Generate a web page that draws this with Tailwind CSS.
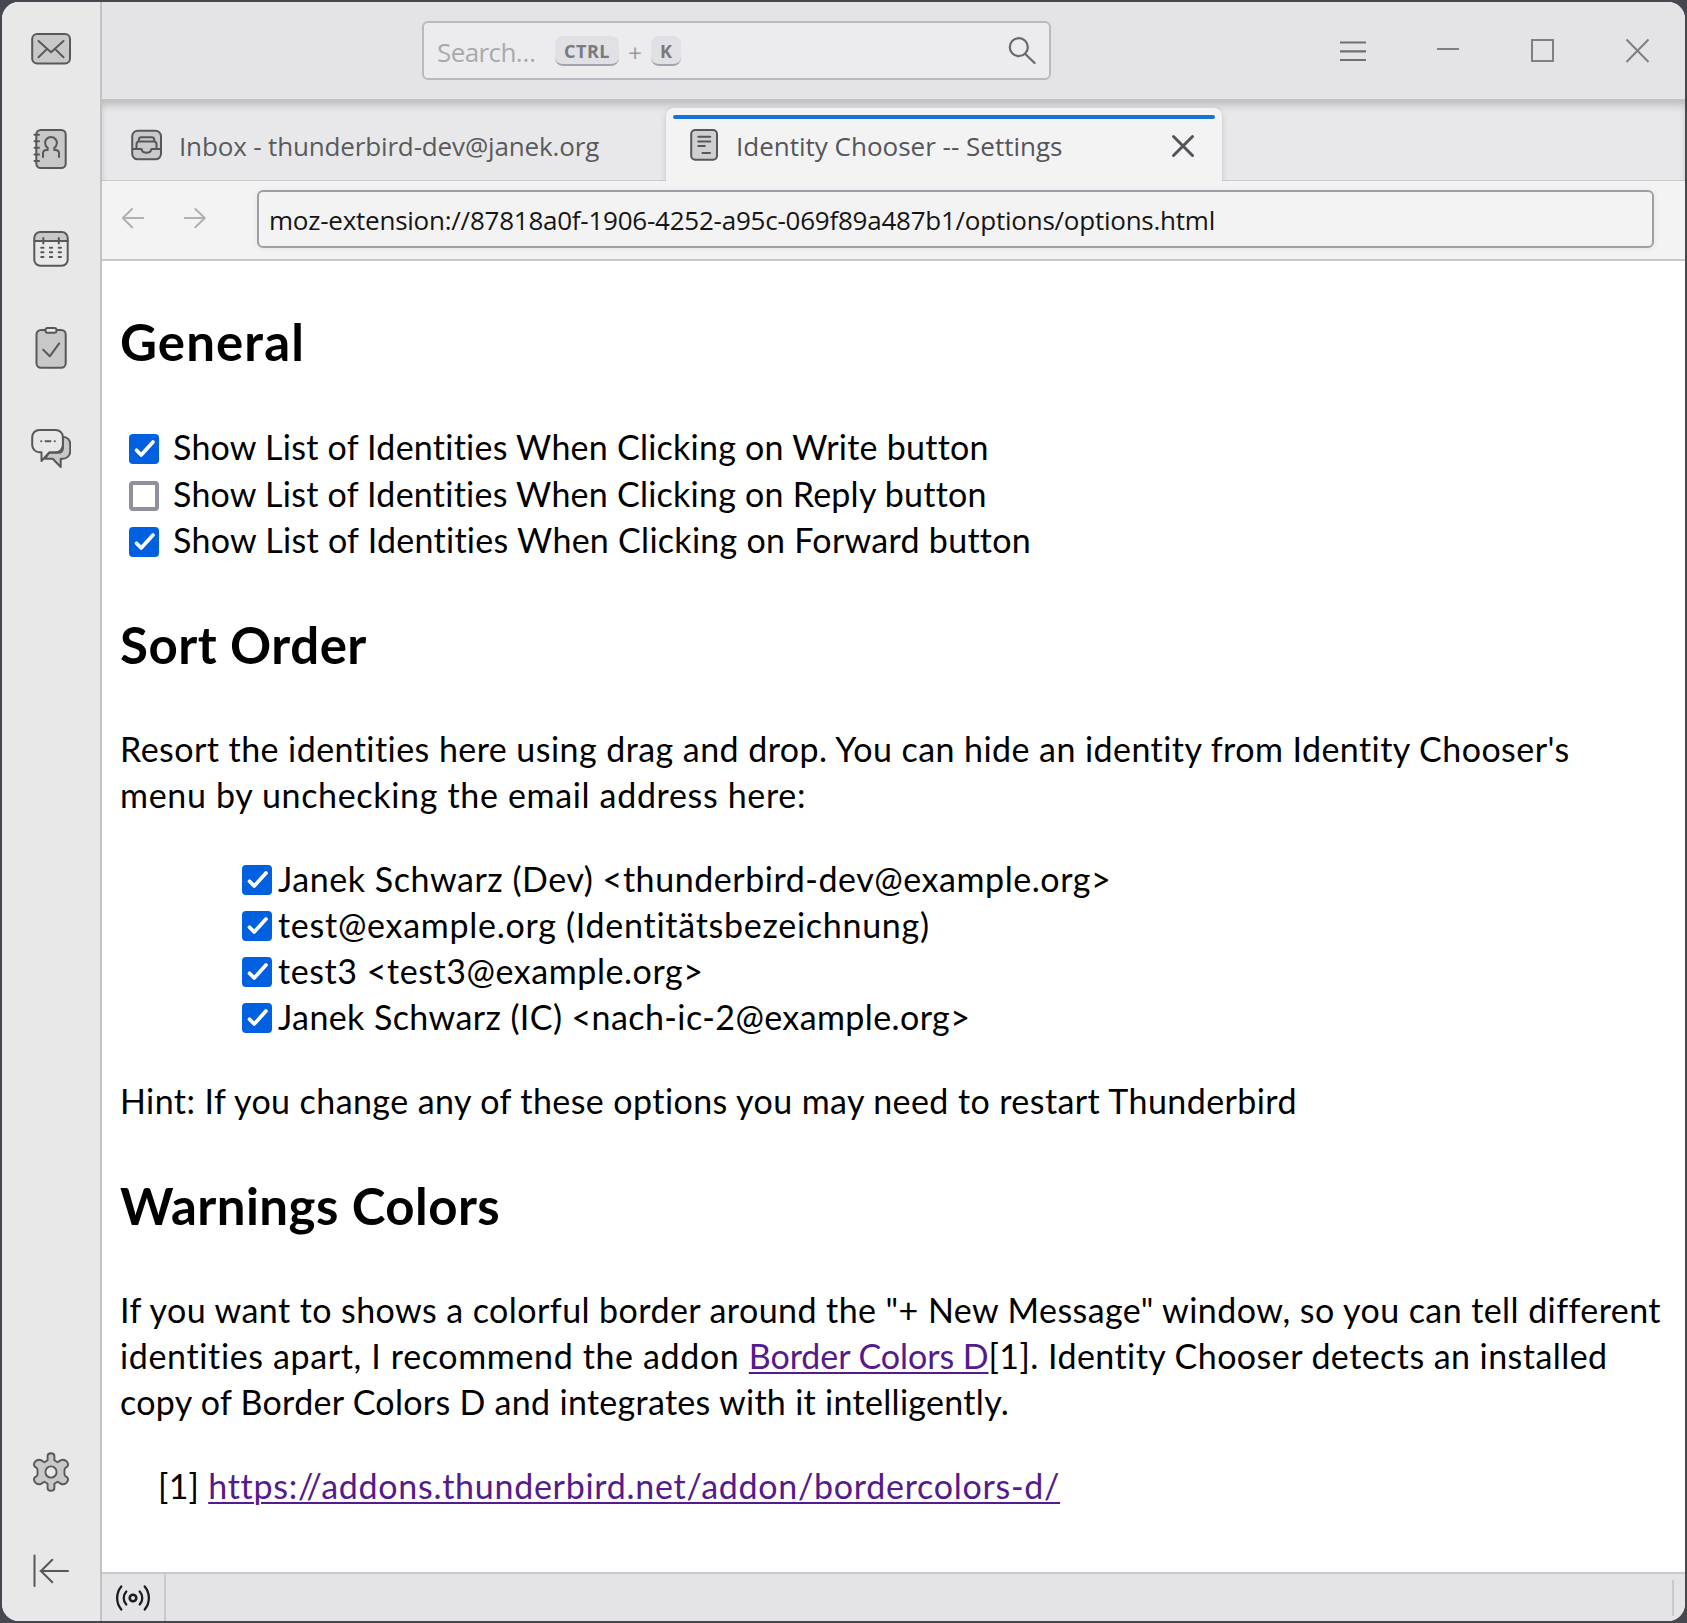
<!DOCTYPE html>
<html lang="en">
<head>
<meta charset="utf-8">
<title>Identity Chooser -- Settings</title>
<script src="https://cdn.jsdelivr.net/npm/@tailwindcss/browser@4"></script>
</head>
<body class="h-[1623px] w-[1687px] overflow-hidden bg-[#464850] pt-[2px] pl-[2px]">
<div class="flex h-[1619px] w-[1683px] overflow-hidden rounded-[17px] bg-white font-['Open_Sans',sans-serif]">

  <!-- Spaces toolbar -->
  <nav class="flex w-[100px] shrink-0 flex-col items-center justify-between border-r-2 border-[#c2c2c2] bg-[#e8e8e8] pt-[25px] pb-[27px]">
    <div class="flex flex-col gap-14">
      <svg class="h-11 w-10" viewBox="31 27 40 44" fill="none" stroke="#585858" stroke-width="2" stroke-linecap="round" stroke-linejoin="round">
        <rect x="32.2" y="34" width="37.8" height="29.6" rx="5" fill="#c8c8c8"/>
        <path d="M38.5 41 51 52.3 63.5 41M38.5 57.3l8.3-8.2M63.5 57.3l-8.3-8.2"/>
      </svg>
      <svg class="h-11 w-10" viewBox="31 127 40 44" fill="none" stroke="#585858" stroke-width="2" stroke-linecap="round" stroke-linejoin="round">
        <rect x="36.3" y="130" width="29.4" height="38" rx="4.5" fill="#c8c8c8"/>
        <path d="M34.5 134.8h4.5M34.5 141.3h4.5M34.5 147.8h4.5M34.5 154.5h4.5M34.5 161h4.5"/>
        <path d="M43 157v-3.5c0-2.300 1.500-3.500 3.500-3.500h1.200v-2.200a5.900 5.900 0 1 1 6.600 0v2.200h1.200c2 0 3.500 1.200 3.500 3.500v3.500"/>
      </svg>
      <svg class="h-11 w-10" viewBox="31 227 40 44" fill="none" stroke="#585858" stroke-width="2" stroke-linecap="round">
        <path d="M34.300 241v-3a6 6 0 0 1 6-6h21.400a6 6 0 0 1 6 6v3z" fill="#c8c8c8" stroke="none"/>
        <rect x="34.300" y="232" width="33.400" height="33.700" rx="6"/>
        <path d="M34.300 241h33.400M43.300 238v5.500M58.800 238v5.500"/>
        <path d="M41.200 247.700h2.300M49.900 247.700h2.300M58.700 247.700h2.300M41.200 252.300h2.300M49.900 252.300h2.300M58.700 252.300h2.300M41.200 256.900h2.300M49.900 256.900h2.300M58.700 256.900h2.300"/>
      </svg>
      <svg class="h-11 w-10" viewBox="31 327 40 44" fill="none" stroke="#585858" stroke-width="2" stroke-linecap="round" stroke-linejoin="round">
        <rect x="36.500" y="330" width="29.200" height="37.800" rx="4.500" fill="#c8c8c8"/>
        <rect x="45.500" y="328" width="11" height="4.700" rx="2" fill="#e8e8e8"/>
        <path d="M43.200 349.800l6.600 6.500 9.400-13"/>
      </svg>
      <svg class="h-11 w-10" viewBox="31 427 40 44" fill="none" stroke="#585858" stroke-width="2" stroke-linecap="round" stroke-linejoin="round">
        <path d="M62.500 436.700c4.700.3 7.700 3.300 7.700 7.500v7.300c0 4-3.400 7.300-7.500 7.300h-2v8.200l-8-8.200H45l4-6h9c3 0 5-2 5-5z" fill="#c8c8c8"/>
        <path d="M39.500 430h16c4.200 0 7.400 3.100 7.400 7.200v7.800c0 4-3.200 7.300-7.400 7.300H49.500l-8 8.700v-8.700h-2c-4.100 0-7.300-3.300-7.300-7.300v-7.800c0-4.100 3.200-7.200 7.300-7.200z" fill="#e8e8e8"/>
        <path d="M41.200 441.200h.1M45.500 441.200h5M54.700 441.200h.1"/>
      </svg>
    </div>
    <div class="flex flex-col gap-14">
      <svg class="h-11 w-10" viewBox="31 1450 40 44" fill="#c8c8c8" stroke="#585858" stroke-width="1.900" stroke-linejoin="round">
        <path id="gear" d="M47.600 1460.300V1456a3.400 2.800 0 0 1 6.800 0v4.300l3.200 1.900 3-1.800c4.500-2.600 10.200 3.900 6 6.700l-1.600 1.200c-.8 1-.8 6.400 0 7.400l1.600 1.200c4.200 2.800-1.500 9.300-6 6.700l-3-1.800-3.200 1.900v4.300a3.400 2.800 0 0 1-6.800 0v-4.300l-3.200-1.900-3 1.800c-4.500 2.600-10.200-3.900-6-6.700l1.600-1.200c.8-1 .8-6.400 0-7.400l-1.600-1.200c-4.200-2.800 1.500-9.300 6-6.700l3 1.800z"/>
        <circle cx="51" cy="1472" r="5.600" fill="#e8e8e8"/>
      </svg>
      <svg class="h-11 w-10" viewBox="31 1550 40 44" fill="none" stroke="#585858" stroke-width="2" stroke-linecap="round" stroke-linejoin="round">
        <path d="M34.500 1555.500v30.500M68 1571H40.500M52.300 1559.700 41 1571l11.300 11.300"/>
      </svg>
    </div>
  </nav>

  <div class="flex min-w-0 flex-1 flex-col">
    <!-- Title bar -->
    <header class="flex h-[99px] shrink-0 items-start border-b-2 border-[#c2c2c5] bg-[#e4e4e6] pt-[19px] pl-[320px]">
      <div class="flex h-[59px] w-[629px] items-center rounded-md border-2 border-[#b9b9c2] bg-[#ececef] pr-3 pl-[13px]">
        <span class="w-[104px] pt-[3px] text-[26px] leading-9 tracking-[-0.6px] text-[#a9a9ad]">Search…</span>
        <kbd class="ml-[14px] flex h-[30px] w-16 items-center justify-center rounded-lg border-b-2 border-[#a3a3ab] bg-[#e0e0e5] pt-[3px] font-['Open_Sans',sans-serif] text-[18px] font-bold tracking-[0.5px] text-[#79797e]">CTRL</kbd>
        <span class="w-8 pt-[4px] text-center text-[24px] leading-9 text-[#9a9a9e]">+</span>
        <kbd class="flex h-[30px] w-[30px] items-center justify-center rounded-lg border-b-2 border-[#a3a3ab] bg-[#e0e0e5] pt-[3px] font-['Open_Sans',sans-serif] text-[18px] font-bold text-[#79797e]">K</kbd>
        <svg class="ml-auto h-[30px] w-[30px]" viewBox="1007 36 30 30" fill="none" stroke="#69696c" stroke-width="2.200" stroke-linecap="round"><circle cx="1018.800" cy="47.200" r="9"/><path d="M1025.300 54l9.300 9"/></svg>
      </div>
      <svg class="mt-[17px] ml-[289px] h-7 w-[26px]" viewBox="1340 36 26 28" stroke="#707072" stroke-width="2.200"><path d="M1340 40.500h26M1340 49.300h26M1340 58h26"/></svg>
      <svg class="mt-[17px] ml-[71px] h-7 w-[22px]" viewBox="1437 38 22 28" stroke="#808083" stroke-width="2"><path d="M1437 49h22"/></svg>
      <svg class="mt-[17px] ml-[72px] h-7 w-[23px]" viewBox="1531 38 23 28" fill="none" stroke="#808083" stroke-width="2"><path d="M1532 40h21v21h-21z"/></svg>
      <svg class="mt-[17px] ml-[71px] h-7 w-[25px]" viewBox="1625 38 25 28" fill="none" stroke="#808083" stroke-width="2"><path d="M1626.500 39.500l22 22.500M1648.500 39.500l-22 22.500"/></svg>
    </header>

    <!-- Tab strip -->
    <div class="relative flex h-[80px] shrink-0 items-end bg-[#e8e8ea] shadow-[inset_0_6px_9px_-2px_#00000030,inset_0_-1px_0_#cccccf]">
      <div class="flex h-[73px] w-[564px] items-center pl-[29px] text-[#5a5a5d]">
        <svg class="h-8 w-8" viewBox="131 130 32 32" fill="none" stroke="#57575a" stroke-width="2" stroke-linejoin="round">
          <rect x="132.200" y="131.800" width="28.800" height="28.500" rx="5.500" fill="#c9c9cb"/>
          <path d="M133 150h8.500c.5 2.500 2.500 3.700 5 3.700s4.500-1.200 5-3.700h9.500"/>
          <path d="M136.500 150v-4.500c0-2 .8-3 2.500-3h15c1.700 0 2.500 1 2.500 3v4.500M138.800 142.500v-1.500c0-2 .9-2.800 2.400-2.800h10.600c1.600 0 2.500.8 2.500 2.800v1.500" fill="none"/>
        </svg>
        <span class="pt-[3px] pl-4 text-[26px] leading-9 tracking-[-0.15px]">Inbox - thunderbird-dev@janek.org</span>
      </div>
      <div class="relative flex h-[73px] w-[556px] items-center rounded-t-lg bg-[#f3f3f3] pl-[23px] text-[#55555b] shadow-[0_2px_6px_#00000028] [clip-path:inset(-2px_-8px_0_-8px)]">
        <div class="absolute top-[7px] right-[7px] left-[7px] h-1 rounded-sm bg-[#1373d9]"></div>
        <svg class="h-8 w-[30px]" viewBox="689 130 30 32" fill="none" stroke="#55555c" stroke-width="2" stroke-linecap="round">
          <rect x="691.200" y="131" width="25.800" height="29.800" rx="4" fill="#cfcfd2"/>
          <path d="M698.300 137.800h12M698.300 142.400h12M698.300 147h6.500M702.500 154h7.500"/>
        </svg>
        <span class="pt-[3px] pl-[17px] text-[26px] leading-9">Identity Chooser -- Settings</span>
        <svg class="absolute top-[25px] right-[25px] h-7 w-7" viewBox="1170 133 28 28" fill="none" stroke="#53535b" stroke-width="3" stroke-linecap="round"><path d="M1174.500 136.500l19 19M1193.500 136.500l-19 19"/></svg>
      </div>
    </div>

    <!-- Navigation bar -->
    <div class="flex h-[80px] shrink-0 items-start border-b-2 border-[#c9c9cb] bg-[#f3f3f3] pt-[9px] pl-[18px]">
      <svg class="mt-4 h-6 w-[26px]" viewBox="120 206 26 24" fill="none" stroke="#b1b1b3" stroke-width="2" stroke-linecap="round" stroke-linejoin="round"><path d="M143.300 218h-20.500M132 209l-9.200 9 9.200 9.200"/></svg>
      <svg class="mt-4 ml-9 h-6 w-[26px]" viewBox="182 206 26 24" fill="none" stroke="#b1b1b3" stroke-width="2" stroke-linecap="round" stroke-linejoin="round"><path d="M184.700 218h20M195.300 209l9.500 9-9.500 9.200"/></svg>
      <div class="ml-[49px] flex h-[58px] w-[1397px] items-center rounded-md border-2 border-[#9e9ea6] px-[10px] pt-[2px] shadow-[0_1px_6px_#00000010]">
        <span class="text-[26px] leading-9 tracking-[-0.24px] whitespace-nowrap text-[#151515]">moz-extension://87818a0f-1906-4252-a95c-069f89a487b1/options/options.html</span>
      </div>
    </div>

    <!-- Options page -->
    <main class="h-[1311px] shrink-0 pt-[51px] pl-[18px] font-[Lato,sans-serif] text-[34px] leading-[46px] whitespace-nowrap text-black">
      <h2 class="text-[51px] leading-[60px] font-bold tracking-[1.1px]">General</h2>
      <div class="mt-[52px] pl-[9px]">
        <div class="flex h-[47px]">
          <svg class="mt-[10px] mr-[14px] size-[30px]" viewBox="0 0 30 30" fill="none"><rect width="30" height="30" rx="4" fill="#0060df"/><path d="M7.500 16.200l4.700 4.800L24 8" stroke="#fff" stroke-width="3.700" stroke-linecap="round" stroke-linejoin="round"/></svg>
          <span class="tracking-[0.24px]">Show List of Identities When Clicking on Write button</span>
        </div>
        <div class="flex h-[46px]">
          <span class="mt-[10px] mr-[14px] size-[30px] rounded border-4 border-[#8f8f9d]"></span>
          <span class="tracking-[0.24px]">Show List of Identities When Clicking on Reply button</span>
        </div>
        <div class="flex h-[46px]">
          <svg class="mt-[10px] mr-[14px] size-[30px]" viewBox="0 0 30 30" fill="none"><rect width="30" height="30" rx="4" fill="#0060df"/><path d="M7.500 16.200l4.700 4.800L24 8" stroke="#fff" stroke-width="3.700" stroke-linecap="round" stroke-linejoin="round"/></svg>
          <span class="tracking-[0.28px]">Show List of Identities When Clicking on Forward button</span>
        </div>
      </div>

      <h2 class="mt-[52px] text-[51px] leading-[60px] font-bold tracking-[0.5px]">Sort Order</h2>
      <p class="mt-[51px]"><span class="tracking-[0.44px]">Resort the identities here using drag and drop. You can hide an identity from Identity Chooser's</span><br><span class="tracking-[0.67px]">menu by unchecking the email address here:</span></p>

      <ul class="mt-[38px] pl-[122px]">
        <li class="flex h-[46px]">
          <svg class="mt-[9px] mr-[6px] size-[30px]" viewBox="0 0 30 30" fill="none"><rect width="30" height="30" rx="4" fill="#0060df"/><path d="M7.500 16.200l4.700 4.800L24 8" stroke="#fff" stroke-width="3.700" stroke-linecap="round" stroke-linejoin="round"/></svg>
          <span class="tracking-[0.55px]">Janek Schwarz (Dev) &lt;thunderbird-dev@example.org&gt;</span>
        </li>
        <li class="flex h-[46px]">
          <svg class="mt-[9px] mr-[6px] size-[30px]" viewBox="0 0 30 30" fill="none"><rect width="30" height="30" rx="4" fill="#0060df"/><path d="M7.500 16.200l4.700 4.800L24 8" stroke="#fff" stroke-width="3.700" stroke-linecap="round" stroke-linejoin="round"/></svg>
          <span class="tracking-[0.73px]">test@example.org (Identitätsbezeichnung)</span>
        </li>
        <li class="flex h-[46px]">
          <svg class="mt-[9px] mr-[6px] size-[30px]" viewBox="0 0 30 30" fill="none"><rect width="30" height="30" rx="4" fill="#0060df"/><path d="M7.500 16.200l4.700 4.800L24 8" stroke="#fff" stroke-width="3.700" stroke-linecap="round" stroke-linejoin="round"/></svg>
          <span class="tracking-[0.56px]">test3 &lt;test3@example.org&gt;</span>
        </li>
        <li class="flex h-[46px]">
          <svg class="mt-[9px] mr-[6px] size-[30px]" viewBox="0 0 30 30" fill="none"><rect width="30" height="30" rx="4" fill="#0060df"/><path d="M7.500 16.200l4.700 4.800L24 8" stroke="#fff" stroke-width="3.700" stroke-linecap="round" stroke-linejoin="round"/></svg>
          <span class="tracking-[0.4px]">Janek Schwarz (IC) &lt;nach-ic-2@example.org&gt;</span>
        </li>
      </ul>

      <p class="mt-[38px] tracking-[0.42px]">Hint: If you change any of these options you may need to restart Thunderbird</p>

      <h2 class="mt-[52px] text-[51px] leading-[60px] font-bold tracking-[0.45px]">Warnings Colors</h2>
      <p class="mt-[51px]"><span class="tracking-[0.43px]">If you want to shows a colorful border around the "+ New Message" window, so you can tell different</span><br><span class="tracking-[0.64px]">identities apart, I recommend the addon </span><a class="tracking-[-0.06px] text-[#551a8b] underline decoration-2 underline-offset-[3px]">Border Colors D</a><span class="tracking-[0.44px]">[1]. Identity Chooser detects an installed</span><br><span class="tracking-[0.3px]">copy of Border Colors D and integrates with it intelligently.</span></p>
      <p class="mt-[38px] pl-[38px]"><span class="tracking-[0.25px]">[1] </span><a class="tracking-[0.72px] text-[#551a8b] underline decoration-2 underline-offset-[3px]">https://addons.thunderbird.net/addon/bordercolors-d/</a></p>
    </main>

    <!-- Status bar -->
    <footer class="flex flex-1 items-stretch border-t-2 border-[#c9c9cb] bg-[#e4e4e6]">
      <div class="flex w-16 items-center border-r-2 border-[#c9c9cb] pl-[11px]">
        <svg class="h-[30px] w-10" viewBox="113 1583.500 40 30" fill="none" stroke="#1c1c1e" stroke-width="2.300" stroke-linecap="round"><circle cx="133" cy="1598.500" r="3.300" stroke-width="2.600"/><path d="M126.300 1592a9.500 9.500 0 0 0 0 13M139.700 1592a9.500 9.500 0 0 1 0 13M121.300 1587a18 18 0 0 0 0 23M144.700 1587a18 18 0 0 1 0 23"/></svg>
      </div>
      <div class="my-[5px] mt-[6px] mr-[11px] ml-auto w-[2px] bg-[#c9c9cb]"></div>
    </footer>
  </div>
</div>
</body>
</html>
